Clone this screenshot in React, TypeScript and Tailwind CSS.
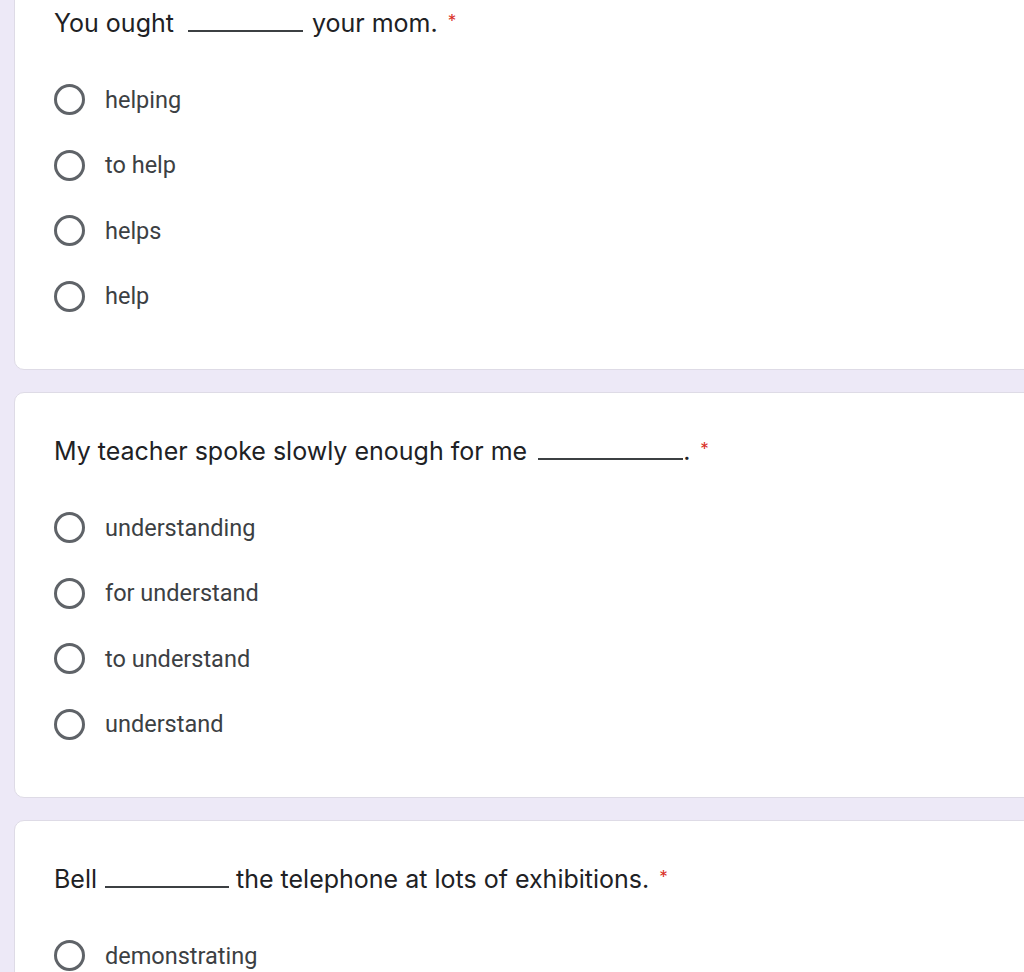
const questions = [
  {
    before: "You ought",
    blankW: "w-[115px]",
    gapL: "ml-[14px]",
    gapR: "mr-[9px]",
    after: "your mom.",
    options: ["helping", "to help", "helps", "help"],
  },
  {
    before: "My teacher spoke slowly enough for me",
    blankW: "w-[145px]",
    gapL: "ml-[11px]",
    gapR: "mr-0",
    after: ".",
    options: ["understanding", "for understand", "to understand", "understand"],
  },
  {
    before: "Bell",
    blankW: "w-[124px]",
    gapL: "ml-[8px]",
    gapR: "mr-[7px]",
    after: "the telephone at lots of exhibitions.",
    options: ["demonstrating", "demonstrated", "demonstrate", "demonstrates"],
  },
];

const Radio = () => (
  <div className="w-[31px] h-[31px] rounded-full border-[3px] border-[#5f6368] shrink-0" />
);

export default function App() {
  return (
    <div className="w-[1024px] h-[972px] overflow-hidden bg-[#ede9f7]">
      <div className="-mt-[36px] ml-[14px] w-[1040px] flex flex-col gap-[22px]">
        {questions.map((q, i) => (
          <div
            key={i}
            className="bg-white rounded-[10px] border border-[#dedbe6] pt-[43px] pb-[40px] pl-[39px]"
          >
            <div
              className="text-[25px] leading-[30px] text-[#202124] flex items-baseline"
              style={{ fontFamily: "Inter, 'Open Sans', sans-serif" }}
            >
              <span>{q.before}</span>
              <span
                className={`inline-block ${q.blankW} ${q.gapL} ${q.gapR} h-[2px] bg-[#3c4043] self-end mb-[6px]`}
              />
              <span>{q.after}</span>
              <span className="text-[#d93025] text-[17px] self-start leading-[20px] mt-[3px] ml-[10px]">*</span>
            </div>
            <div className="mt-[29px] flex flex-col">
              {q.options.map((o) => (
                <div key={o} className="h-[65.5px] flex items-center gap-[20px]">
                  <Radio />
                  <span
                    className="text-[23.5px] text-[#3c4043] mt-[1px]"
                    style={{ fontFamily: "Roboto, sans-serif" }}
                  >
                    {o}
                  </span>
                </div>
              ))}
            </div>
          </div>
        ))}
      </div>
    </div>
  );
}
